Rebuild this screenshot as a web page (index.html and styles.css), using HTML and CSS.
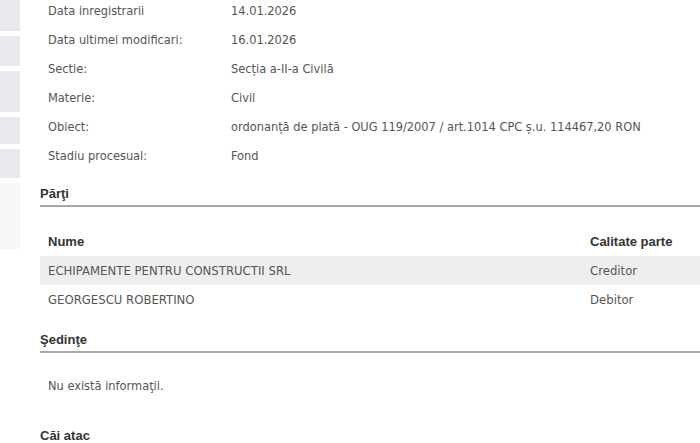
FILE: index.html
```html
<!DOCTYPE html>
<html lang="ro">
<head>
    <meta charset="UTF-8">
    <title>Detalii dosar</title>
    <link rel="stylesheet" href="styles.css">
</head>
<body>
    <div class="page">
        <div class="side">
            <div class="tile t1"></div>
            <div class="tile t2"></div>
            <div class="tile t3"></div>
            <div class="tile t4"></div>
            <div class="tile t5"></div>
            <div class="tile faint"></div>
        </div>
        <div class="content">
            <div class="details">
                <div class="row"><span class="label">Data inregistrarii</span><span class="value">14.01.2026</span></div>
                <div class="row"><span class="label">Data ultimei modificari:</span><span class="value">16.01.2026</span></div>
                <div class="row"><span class="label">Sectie:</span><span class="value">Secția a-II-a Civilă</span></div>
                <div class="row"><span class="label">Materie:</span><span class="value">Civil</span></div>
                <div class="row"><span class="label">Obiect:</span><span class="value">ordonanță de plată - OUG 119/2007 / art.1014 CPC ș.u. 114467,20 RON</span></div>
                <div class="row"><span class="label">Stadiu procesual:</span><span class="value">Fond</span></div>
            </div>

            <h3 class="section-title">Părţi</h3>
            <table class="parties">
                <thead>
                    <tr><th>Nume</th><th class="role">Calitate parte</th></tr>
                </thead>
                <tbody>
                    <tr class="alt"><td>ECHIPAMENTE PENTRU CONSTRUCTII SRL</td><td class="role">Creditor</td></tr>
                    <tr><td>GEORGESCU ROBERTINO</td><td class="role">Debitor</td></tr>
                </tbody>
            </table>

            <h3 class="section-title meetings">Şedinţe</h3>
            <p class="empty">Nu există informaţii.</p>

            <h3 class="section-title last">Căi atac</h3>
        </div>
    </div>
</body>
</html>
```

FILE: styles.css
```css
body {
    margin: 0;
    background: #ffffff;
    font-family: 'DejaVu Sans Condensed', 'DejaVu Sans', sans-serif;
    font-size: 12.7px;
    line-height: 15px;
    color: #555555;
    overflow: hidden;
}
.page {
    display: flex;
}
.side {
    width: 20px;
    flex-shrink: 0;
    display: flex;
    flex-direction: column;
}
.tile {
    background: #e8e9ef;
    margin-bottom: 5px;
}
.t1 { height: 31px; }
.t2 { height: 30px; }
.t3 { height: 41px; }
.t4 { height: 27px; }
.t5 { height: 29px; }
.faint {
    height: 66px;
    background: #f7f7f8;
}
.content {
    flex: 1;
    padding-left: 20px;
}
.details {
    padding-left: 8px;
    margin-top: -4px;
}
.row {
    display: flex;
    height: 29px;
    align-items: center;
}
.label {
    width: 183px;
    flex-shrink: 0;
}
.section-title {
    font-family: 'Liberation Sans', Arial, sans-serif;
    font-size: 13px;
    line-height: 15px;
    font-weight: bold;
    color: #333333;
    margin: 0;
    padding: 16px 0 4px;
    border-bottom: 2px solid #a8a8a8;
}
.parties {
    width: 100%;
    border-collapse: collapse;
    margin-top: 20px;
}
.parties th {
    font-family: 'Liberation Sans', Arial, sans-serif;
    font-size: 13px;
    font-weight: bold;
    color: #333333;
    text-align: left;
    height: 29px;
    padding: 0 0 0 8px;
}
.parties td {
    font-size: 13px;
    height: 29px;
    padding: 0 0 0 8px;
}
.parties .role {
    width: 110px;
    padding-left: 0;
}
.parties .alt {
    background: #eeeeee;
}
.section-title.meetings {
    padding-top: 18px;
}
.empty {
    margin: 0;
    padding: 25px 0 0 8px;
    height: 19px;
}
.section-title.last {
    padding-top: 31px;
    border-bottom: none;
}
```
